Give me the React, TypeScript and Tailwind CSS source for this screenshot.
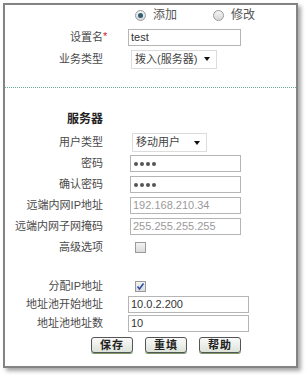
import React from 'react';

const font = "font-['Liberation_Sans','Noto_Sans_CJK_SC',sans-serif]";

const Radio = ({ checked }: { checked?: boolean }) => (
  <span className="w-[11px] h-[11px] rounded-full border border-[#9a9a9a] bg-gradient-to-b from-[#f4f4f4] to-[#d8d8d8] flex items-center justify-center">
    {checked && <span className="w-[5px] h-[5px] rounded-full bg-[#2d5f73]" />}
  </span>
);

const Check = ({ checked }: { checked?: boolean }) => (
  <span className="w-[11px] h-[11px] border border-[#9a9a9a] bg-gradient-to-b from-[#f2f2f2] to-[#dcdcdc] flex items-center justify-center">
    {checked && (
      <svg width="9" height="9" viewBox="0 0 9 9">
        <path d="M1.5 4.5 L3.5 7 L7.5 1.5" fill="none" stroke="#2b4fa8" strokeWidth="1.6" />
      </svg>
    )}
  </span>
);

const Field = ({ value, gray, w = 'w-[111px]' }: { value: string; gray?: boolean; w?: string }) => (
  <div className={`${w} h-[17px] border border-[#b5b5b5] bg-white px-[2px] flex items-center text-[11px] ${gray ? 'text-[#9a9a9a]' : 'text-[#333]'}`}>
    {value}
  </div>
);

const Dots = () => (
  <div className="w-[111px] h-[17px] border border-[#b5b5b5] bg-white px-[3px] flex items-center gap-[2px]">
    {[0, 1, 2, 3].map((i) => (
      <span key={i} className="w-[4px] h-[4px] rounded-full bg-[#555]" />
    ))}
  </div>
);

const Select = ({ value, w }: { value: string; w: string }) => (
  <div className={`${w} h-[19px] border border-[#dcdcdc] bg-white pl-[3px] pr-[6px] flex items-center justify-between text-[11px] text-[#444]`}>
    <span>{value}</span>
    <span className="w-0 h-0 border-l-[3.5px] border-r-[3.5px] border-t-[4px] border-l-transparent border-r-transparent border-t-[#111]" />
  </div>
);

const Row = ({ label, h, ml = 'ml-[27px]', children, req }: { label: string; h: string; ml?: string; children?: React.ReactNode; req?: boolean }) => (
  <div className={`flex items-center ${h}`}>
    <div className="w-[98px] text-right text-[11px] text-[#4a4a4a] relative">
      {label}
      {req && <span className="absolute left-full top-[-1px] text-[#d01818] text-[11px]">*</span>}
    </div>
    <div className={ml}>{children}</div>
  </div>
);

const Btn = ({ label }: { label: string }) => (
  <button className="w-[42px] h-[16px] rounded-[3px] border border-[#555] bg-gradient-to-b from-[#fafafa] to-[#dde3d8] shadow-[0_1px_0_#7a9a6a] text-[11px] font-bold text-[#222] leading-none tracking-[1px]">
    {label}
  </button>
);

export default function App() {
  return (
    <div className={`w-[307px] h-[375px] bg-white relative ${font}`}>
      <div className="absolute left-[3px] top-[3px] w-[295px] h-[365px] border-2 border-[#838383] bg-white shadow-[3px_3px_4px_rgba(0,0,0,0.35)] flex flex-col">
        {/* 模式 */}
        <div className="h-[20px] flex items-center text-[12px] text-[#555]">
          <div className="ml-[130px] flex items-center gap-[7px]">
            <Radio checked />
            <span>添加</span>
          </div>
          <div className="ml-[36px] flex items-center gap-[7px]">
            <Radio />
            <span>修改</span>
          </div>
        </div>
        <div className="mt-[2px]">
          <Row label="设置名" h="h-[21px]" ml="ml-[25px]" req>
            <Field value="test" w="w-[113px]" />
          </Row>
        </div>
        <div className="mt-[1px]">
          <Row label="业务类型" h="h-[20px]" ml="ml-[28px]">
            <Select value="拨入(服务器)" w="w-[86px]" />
          </Row>
        </div>
        <div className="mt-[18px] border-t border-dotted border-[#6aa89a]" />

        {/* 服务器 */}
        <div className="mt-[22px] h-[18px] flex items-center">
          <div className="w-[98px] text-right text-[12px] font-bold text-[#222]">服务器</div>
        </div>
        <div className="mt-[4px]">
          <Row label="用户类型" h="h-[21px]" ml="ml-[29px]">
            <Select value="移动用户" w="w-[75px]" />
          </Row>
          <Row label="密码" h="h-[21px]">
            <Dots />
          </Row>
          <Row label="确认密码" h="h-[21px]">
            <Dots />
          </Row>
          <Row label="远端内网IP地址" h="h-[21px]">
            <Field value="192.168.210.34" gray />
          </Row>
          <Row label="远端内网子网掩码" h="h-[21px]">
            <Field value="255.255.255.255" gray />
          </Row>
          <Row label="高级选项" h="h-[20px]" ml="ml-[32px]">
            <Check />
          </Row>
        </div>

        <div className="mt-[20px]">
          <Row label="分配IP地址" h="h-[18px]" ml="ml-[32px]">
            <Check checked />
          </Row>
          <Row label="地址池开始地址" h="h-[19px]" ml="ml-[25px]">
            <Field value="10.0.2.200" w="w-[121px]" />
          </Row>
          <Row label="地址池地址数" h="h-[19px]" ml="ml-[25px]">
            <Field value="10" w="w-[121px]" />
          </Row>
        </div>

        <div className="mt-[4px] flex gap-[12px] ml-[86px]">
          <Btn label="保存" />
          <Btn label="重填" />
          <Btn label="帮助" />
        </div>
      </div>
    </div>
  );
}
